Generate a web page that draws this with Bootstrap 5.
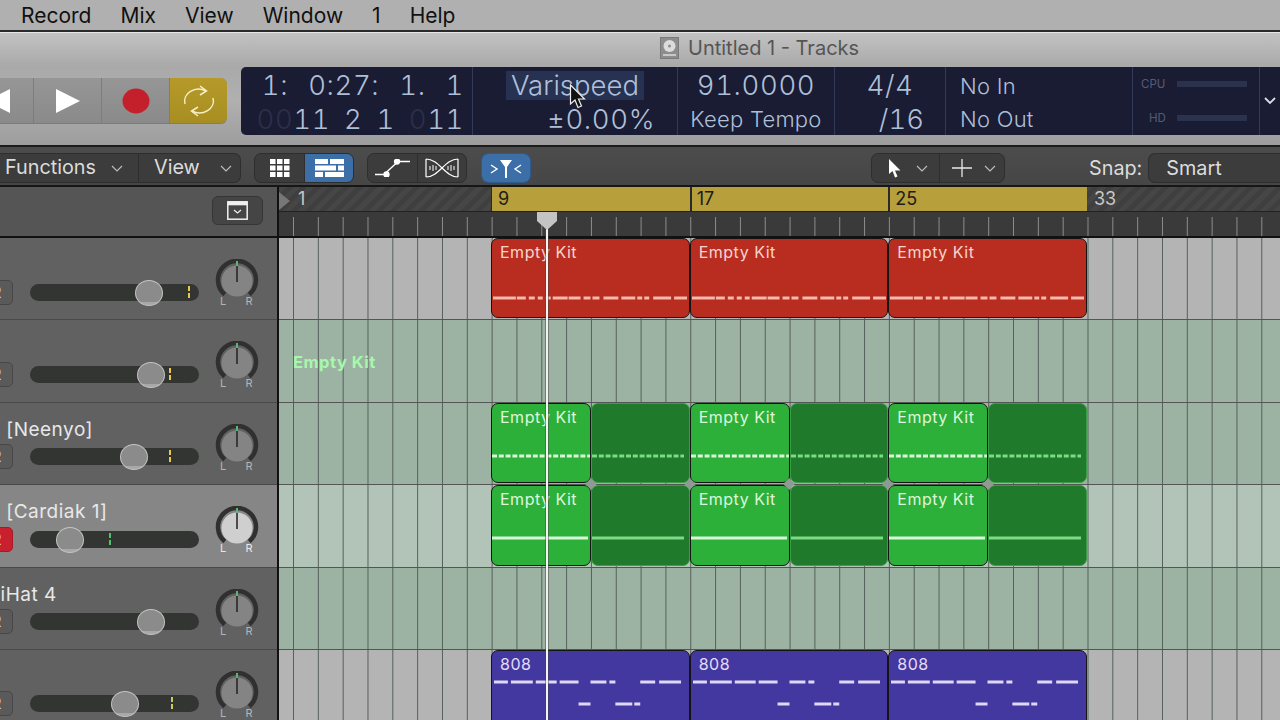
<!DOCTYPE html>
<html lang="en">
<head>
<meta charset="utf-8">
<title>Untitled 1 - Tracks</title>
<link href="https://cdn.jsdelivr.net/npm/bootstrap@5.3.0/dist/css/bootstrap.min.css" rel="stylesheet">
<style>
html,body{width:1280px;height:720px;overflow:hidden;margin:0;background:#555;font-family:Inter,"Noto Sans",sans-serif;}
.stage{width:1280px;height:720px;position:relative;overflow:hidden;}
.stage>*{flex:none;}
.menubar{height:30px;background:#b0b0b0;color:#111;font-size:21px;line-height:31px;padding-left:21px;gap:29px;}
.winrule{height:3px;background:#2a2a2a;border-bottom:1px solid #e6e6e6;}
.chrome{height:114px;background:linear-gradient(#c2c2c2,#a9a9a9 30%,#b0b0b0 60%,#9d9d9d);border-bottom:2px solid #1c1c1c;}
.wintitle{height:34px;padding:0 0 5px 660px;gap:9px;color:#555;font-size:20px;}
.transport{height:46px;margin-top:11px;width:227px;flex:none;border-radius:0 6px 6px 0;overflow:hidden;background:#8f8f8f;border-bottom:1px solid #7b7b7b;}
.tseg{border-right:1px solid #7d7d7d;background:linear-gradient(#969696,#8a8a8a);}
.tseg-a{width:34px;overflow:hidden;}
.tseg-b{width:68px;}
.tseg-c{width:57px;background:linear-gradient(#b59a2a,#a88e22);border:0;}
.lcd{margin-left:14px;height:68px;flex:1;background:#1a1c33;border-radius:5px 0 0 5px;color:#aebfd8;overflow:hidden;}
.lcol{border-right:1px solid #333a58;height:68px;flex:none;position:relative;}
.lcol-1{width:232px;}.lcol-2{width:205px;}.lcol-3{width:157px;}.lcol-4{width:111px;}.lcol-5{width:187px;}.lcol-6{width:127px;}
.lbig{font-size:27.5px;font-weight:300;line-height:36px;height:36px;white-space:pre;font-variant-numeric:tabular-nums;letter-spacing:.6px;}
.lbig2{line-height:32px;height:32px;}
.lsmall{font-size:22px;font-weight:300;line-height:32px;height:32px;white-space:pre;letter-spacing:.25px;}
.lsmall-t{height:36px;line-height:38px;}
.ws-wide{word-spacing:2px;}
.ws-row{word-spacing:-1px;}
.ldim{color:#2b2f4a;}
.vsp-wrap{height:36px;}
.vsp{display:inline-block;background:#273151;padding:0 5px;height:29px;line-height:28px;margin-top:4px;font-size:27.5px;font-weight:300;}
.pad-r22{padding-right:22px;}
.pad-r21{padding-right:21px;letter-spacing:0;}
.lpad{padding-left:14px;}
.meters{padding:10px 12px 10px 0;}
.cpu{font-size:11.5px;color:#535c77;line-height:14px;}
.cpubar{width:70px;height:6px;background:#2b324d;}
.toolbar{height:40px;background:linear-gradient(#4c4c4c,#464646);border-bottom:2px solid #161616;padding-top:6px;color:#dcdcdc;font-size:19.8px;}
.tg{height:30px;background:#3c3c3c;border:1px solid #2e2e2e;border-radius:7px;overflow:hidden;flex:none;}
.tb,.btn-group>.tb{height:100%;border:0;border-radius:0;padding:0;color:#dcdcdc;background:transparent;font-size:19.8px;flex:none;margin:0;}
.btn-group>.tb+.tb{border-left:1px solid #2e2e2e;}
.btn-group>.tb-on{background:#3c6ea8;flex:1;}
.tb:hover{color:#dcdcdc;}
.w-rest{flex:1 1 0!important;}
.chev-m{margin-right:12px;}
.sidebar{width:279px;flex:none;border-right:2px solid #111;background:#616161;}
.rulerhead{height:51px;background:#555;border-bottom:2px solid #111;}
.rhbtn{width:51px;height:29px;margin:9px 14px 0 0;background:#454545;border:1px solid #363636;border-radius:6px;}
.trk{height:82.4px;background:#616161;border-bottom:1px solid #494949;color:#e8e8e8;overflow:hidden;}
.trk-on{background:#868686;}
.tl{width:216px;flex:none;}
.tname{height:24px;margin-top:15px;line-height:24px;font-size:19px;white-space:nowrap;letter-spacing:.5px;}
.tctl{height:26px;margin-top:2px;}
.rbtn{width:34px;height:25px;margin-left:-21px;flex:none;background:#5a5a5a;border:1px solid #474747;border-radius:5px;font-size:16px;line-height:23px;text-align:center;font-weight:600;color:#e8e8e8;padding:0;}
.rbtn-on{background:#c8202f;border-color:#a61a26;color:#fff;}
.fader{width:169px;height:17px;margin-left:17px;background:#333533;border-radius:9px;position:relative;flex:none;}
.thumb{position:absolute;top:-4px;width:28px;height:26px;margin-left:-14px;border-radius:50%;background:linear-gradient(#8a8b8a 86%,#a8a8a8 86%);border:1.5px solid #c4c4c4;}
.lvl{position:absolute;top:2px;width:2px;height:13px;background:repeating-linear-gradient(#e8c84a 0 5px,transparent 5px 7px);margin-left:-1px;}
.panwrap{margin:21px 0 0 -2px;flex:none;}
.panwrap text{font-size:11px;fill:#b4b4b4;font-family:Inter,sans-serif;}
.arrange{flex:1;position:relative;min-width:0;}
.ruler{height:51px;border-bottom:2px solid #111;background:#3a3a3a;}
.bars{height:25px;border-bottom:1px solid #222;background:repeating-linear-gradient(135deg,#464646 0 5px,#3f3f3f 5px 10px);color:#c8c8c8;font-size:18px;line-height:24px;}
.hatch1{width:212px;flex:none;padding-left:19px;}
.hatch2{padding-left:7px;}
.gold{background:#b79f3c;color:#1c1c1c;flex:none;}
.goldbar{width:198.67px;flex:none;border-left:1px solid #2a2a2a;padding-left:6px;}
.goldbar+.goldbar{border-left:2px solid #2a2a2a;padding-left:5px;}
.ticks{height:24px;background-image:linear-gradient(90deg,#8c8c8c 1px,transparent 1px);background-size:24.83px 100%;background-position:14px 5px;background-repeat:repeat-x;}
.lane{height:82.4px;padding:0 0 1px 212px;border-bottom:1px solid #555;background-color:#b4b4b4;background-image:linear-gradient(90deg,#55605a 1px,transparent 1px);background-size:24.83px 100%;background-position:14px 0;}
.lane-g{background-color:#9cb2a2;}
.lane-s{background-color:#b2c4b7;}
.lane-p{padding:2px 0 0 14px;color:#a8f7ac;font-weight:700;font-size:16.5px;letter-spacing:.5px;}
.clip{width:198.67px;flex:none;border:1px solid #141414;border-radius:7px;font-size:16px;letter-spacing:.5px;overflow:hidden;height:100%;}
.clip-r{background:#b92d20;color:#f7d5cd;}
.clip-u{background:#43389f;color:#e4dcf8;border-radius:7px 7px 0 0;height:80px;}
.pair{width:198.67px;flex:none;height:100%;}
.clip-g{background:#2db03a;color:#dcf7dc;width:100px;flex:none;border:1px solid #141414;border-radius:7px;font-size:16px;letter-spacing:.5px;overflow:hidden;}
.loop-g{background:#1f7a2b;flex:1;border:1.5px solid #3c9c47;border-radius:7px;overflow:hidden;}
.clabel{padding-left:8px;height:27px;line-height:27px;}
.nt{display:block;}
.off-r{margin-top:30px;}
.off-g{margin-top:23px;}
.off-lp{margin-top:50px;}
.off-u{margin-top:2px;}
.playline{position:absolute;left:267px;top:26px;bottom:0;width:2px;background:#f4f4f4;box-shadow:0 0 0 .5px #444;}
.playhead{position:absolute;left:257px;top:25px;}
.loopmark{position:absolute;left:-1px;top:5px;}
.joint{position:absolute;top:293px;width:8px;height:8px;background:#8f9a92;transform:rotate(45deg);}
.pointer{position:absolute;left:569px;top:84px;}
</style>
</head>
<body>
<svg width="0" height="0" class="d-none">
<symbol id="mred" viewBox="0 0 198 4"><path d="M1 2H24M25 2H34M37 2H43M46 2H51M54 2H59M61 2H76M77 2H89M92 2H99M101 2H108M112 2H127M130 2H144M146 2H151M153 2H158M162 2H180M183 2H196" stroke="#f6b9ab" stroke-width="3"/></symbol>
<symbol id="mpur" viewBox="0 0 198 26"><path d="M2 2H16M19 2H41M44 2H65M68 2H87M99 2H115M118 2H124M149 2H164M168 2H190" stroke="#e0d8f7" stroke-width="3"/><path d="M87 24H99M124 24H141M143 24H149" stroke="#e0d8f7" stroke-width="3"/></symbol>
<symbol id="pan" viewBox="0 0 46 50"><path d="M10.8 35.5A19 19 0 1 1 35.2 35.5" fill="none" stroke="#2f302f" stroke-width="4.5"/></symbol>
</svg>
<div class="stage d-flex flex-column">
  <div class="menubar d-flex"><span>Record</span><span>Mix</span><span>View</span><span>Window</span><span>1</span><span>Help</span></div>
  <div class="winrule"></div>
  <div class="chrome">
    <div class="wintitle d-flex align-items-center">
      <svg width="19" height="22" viewBox="0 0 19 22"><rect x=".5" y=".5" width="18" height="21" fill="#8d8d8d" stroke="#7a7a7a"/><circle cx="9.5" cy="9" r="6" fill="#dcdcdc"/><circle cx="9.5" cy="9" r="1.5" fill="#8d8d8d"/><rect x="3" y="17" width="13" height="2" fill="#c8c8c8"/></svg>
      <span>Untitled 1 - Tracks</span>
    </div>
    <div class="d-flex">
      <div class="transport d-flex">
        <div class="tseg tseg-a d-flex align-items-center"><svg width="10" height="24" viewBox="0 0 10 24"><path d="M-14 12L10 0V24Z" fill="#fff"/></svg></div>
        <div class="tseg tseg-b d-flex align-items-center justify-content-center"><svg width="24" height="24" viewBox="0 0 24 24"><path d="M0 0L24 12L0 24Z" fill="#fff"/></svg></div>
        <div class="tseg tseg-b d-flex align-items-center justify-content-center"><svg width="28" height="26" viewBox="0 0 28 26"><ellipse cx="14" cy="13" rx="13.5" ry="12.5" fill="#c4202c"/></svg></div>
        <div class="tseg tseg-c d-flex align-items-center justify-content-center"><svg width="34" height="32" viewBox="0 0 34 32" fill="none" stroke="#f6efc4" stroke-width="1.5"><path d="M3 19A14 12 0 0 1 24 6"/><path d="M18 1L24.500 6L18 10"/><path d="M31 13A14 12 0 0 1 10 26"/><path d="M16 31L9.500 26L16 22"/></svg></div>
      </div>
      <div class="lcd d-flex">
        <div class="lcol lcol-1 text-end pe-2"><div class="lbig ws-wide">1:  0:27:  1.  1</div><div class="lbig lbig2 ws-row"><span class="ldim">00</span>11  2  1  <span class="ldim">0</span>11</div></div>
        <div class="lcol lcol-2"><div class="text-center vsp-wrap"><span class="vsp">Varispeed</span></div><div class="lbig lbig2 text-end pad-r22">±0.00%</div></div>
        <div class="lcol lcol-3 text-center"><div class="lbig">91.0000</div><div class="lsmall">Keep Tempo</div></div>
        <div class="lcol lcol-4"><div class="lbig text-center">4/4</div><div class="lbig lbig2 text-end pad-r21">/16</div></div>
        <div class="lcol lcol-5 lpad"><div class="lsmall lsmall-t">No In</div><div class="lsmall">No Out</div></div>
        <div class="lcol lcol-6 meters d-flex flex-column justify-content-between">
          <div class="d-flex align-items-center justify-content-between ps-2"><span class="cpu">CPU</span><span class="cpubar"></span></div>
          <div class="d-flex align-items-center justify-content-between ps-3"><span class="cpu">HD</span><span class="cpubar"></span></div>
        </div>
        <div class="flex-fill d-flex align-items-center justify-content-center"><svg width="12" height="8" viewBox="0 0 12 8"><path d="M1 1L6 6L11 1" fill="none" stroke="#d8dde8" stroke-width="1.800"/></svg></div>
      </div>
    </div>
  </div>
  <div class="toolbar d-flex">
    <div class="tg btn-group" style="width:241px;border-left:0;border-radius:0 7px 7px 0" role="group">
      <button class="btn tb d-flex align-items-center" style="width:139px;padding-left:5px"><span>Functions</span><svg class="ms-auto me-3" width="12" height="7" viewBox="0 0 12 7"><path d="M1 1L6 6L11 1" fill="none" stroke="#bbb" stroke-width="1.200"/></svg></button>
      <button class="btn tb w-rest d-flex align-items-center" style="padding-left:15px"><span>View</span><svg class="ms-auto me-2" width="12" height="7" viewBox="0 0 12 7"><path d="M1 1L6 6L11 1" fill="none" stroke="#bbb" stroke-width="1.200"/></svg></button>
    </div>
    <div class="tg btn-group" style="width:100px;margin-left:13px" role="group">
      <button class="btn tb d-flex align-items-center justify-content-center" style="width:50px" aria-label="Grid"><svg width="20" height="18" viewBox="0 0 20 18" fill="#fff"><rect width="5.500" height="5"/><rect x="7" width="5.500" height="5"/><rect x="14" width="5.500" height="5"/><rect y="6.500" width="5.500" height="5"/><rect x="7" y="6.500" width="5.500" height="5"/><rect x="14" y="6.500" width="5.500" height="5"/><rect y="13" width="5.500" height="5"/><rect x="7" y="13" width="5.500" height="5"/><rect x="14" y="13" width="5.500" height="5"/></svg></button>
      <button class="btn tb tb-on d-flex align-items-center justify-content-center" aria-label="List"><svg width="29" height="18" viewBox="0 0 29 18" fill="#fff"><rect width="13" height="5"/><rect x="15" width="14" height="5"/><rect y="6.500" width="21" height="5"/><rect x="23" y="6.500" width="6" height="5"/><rect y="13" width="8" height="5"/><rect x="10" y="13" width="19" height="5"/></svg></button>
    </div>
    <div class="tg btn-group" style="width:100px;margin-left:13px" role="group">
      <button class="btn tb d-flex align-items-center justify-content-center" style="width:50px" aria-label="Automation"><svg width="36" height="18" viewBox="0 0 36 18" fill="none" stroke="#fff" stroke-width="1.300"><path d="M0 15.500H9L23 2.500H35"/><circle cx="11.500" cy="15.500" r="2.500" fill="#fff"/><circle cx="22" cy="2.500" r="2.500" fill="#fff"/></svg></button>
      <button class="btn tb w-rest d-flex align-items-center justify-content-center" aria-label="Flex"><svg width="34" height="20" viewBox="0 0 34 20" fill="none" stroke="#fff" stroke-width="1.200"><path d="M1 1C14 1 20 19 33 19M1 19C14 19 20 1 33 1M1 1V19M33 1V19"/><path d="M5 8V12M8 7V13M11 8V12M23 8V12M26 7V13M29 8V12" stroke-width="1"/></svg></button>
    </div>
    <div class="tg btn-group" style="width:50px;margin-left:14px;border-color:#2f5a8c" role="group">
      <button class="btn tb tb-on d-flex align-items-center justify-content-center" aria-label="Catch"><svg width="32" height="19" viewBox="0 0 32 19" fill="none" stroke="#fff" stroke-width="1.400"><path d="M1 6L7 10L1 14M31 6L25 10L31 14"/><path d="M10 1H22L17 8V19H15V8Z" fill="#fff" stroke="none"/></svg></button>
    </div>
    <div class="tg btn-group" style="width:134px;margin-left:340px" role="group">
      <button class="btn tb d-flex align-items-center" style="width:68px;padding-left:16px" aria-label="Pointer"><svg width="14" height="19" viewBox="0 0 14 19"><path d="M1 0V15L4.500 12L7 18.500L9.500 17.500L7 11.500H12.500Z" fill="#fff"/></svg><svg class="ms-auto chev-m" width="12" height="7" viewBox="0 0 12 7"><path d="M1 1L6 6L11 1" fill="none" stroke="#bbb" stroke-width="1.200"/></svg></button>
      <button class="btn tb w-rest d-flex align-items-center" style="padding-left:12px" aria-label="Marquee"><svg width="20" height="18" viewBox="0 0 20 18"><path d="M0 9H20M10 0V18" stroke="#e8e8e8" stroke-width="1.300"/></svg><svg class="ms-auto me-2" width="12" height="7" viewBox="0 0 12 7"><path d="M1 1L6 6L11 1" fill="none" stroke="#bbb" stroke-width="1.200"/></svg></button>
    </div>
    <span style="margin-left:84px;line-height:30px">Snap:</span>
    <div class="tg" style="margin-left:6px;flex:1;border-right:0;border-radius:7px 0 0 7px;padding-left:17px;line-height:28px">Smart</div>
  </div>
  <div class="d-flex" style="height:533px">
    <div class="sidebar">
      <div class="rulerhead d-flex justify-content-end"><div class="rhbtn d-flex align-items-center justify-content-center"><svg width="21" height="19" viewBox="0 0 21 19"><rect x=".8" y=".8" width="19.400" height="17.400" fill="none" stroke="#f0f0f0" stroke-width="1.500"/><rect x=".8" y=".8" width="19.400" height="3.500" fill="#f0f0f0"/><path d="M7 9L10.500 12L14 9" fill="none" stroke="#f0f0f0" stroke-width="1.200"/></svg></div></div>

      <div class="trk d-flex"><div class="tl"><div class="tname"></div><div class="tctl d-flex align-items-center"><button class="rbtn">R</button><div class="fader"><span class="thumb" style="left:119px"></span><span class="lvl" style="left:159px"></span></div></div></div><svg class="panwrap" width="46" height="50"><use href="#pan"/><circle cx="23" cy="22" r="15.500" fill="#848484"/><path d="M23 2V7" stroke="#55b87a" stroke-width="2"/><path d="M23 7V23" stroke="#222" stroke-width="1.500"/><text x="9" y="46" text-anchor="middle">L</text><text x="35" y="46" text-anchor="middle">R</text></svg></div>

      <div class="trk d-flex"><div class="tl"><div class="tname"></div><div class="tctl d-flex align-items-center"><button class="rbtn">R</button><div class="fader"><span class="thumb" style="left:121px"></span><span class="lvl" style="left:140px"></span></div></div></div><svg class="panwrap" width="46" height="50"><use href="#pan"/><circle cx="23" cy="22" r="15.500" fill="#848484"/><path d="M23 2V7" stroke="#55b87a" stroke-width="2"/><path d="M23 7V23" stroke="#222" stroke-width="1.500"/><text x="9" y="46" text-anchor="middle">L</text><text x="35" y="46" text-anchor="middle">R</text></svg></div>

      <div class="trk d-flex"><div class="tl"><div class="tname" style="margin-left:-25px">Kit [Neenyo]</div><div class="tctl d-flex align-items-center"><button class="rbtn">R</button><div class="fader"><span class="thumb" style="left:104px"></span><span class="lvl" style="left:140px"></span></div></div></div><svg class="panwrap" width="46" height="50"><use href="#pan"/><circle cx="23" cy="22" r="15.500" fill="#848484"/><path d="M23 2V7" stroke="#55b87a" stroke-width="2"/><path d="M23 7V23" stroke="#222" stroke-width="1.500"/><text x="9" y="46" text-anchor="middle">L</text><text x="35" y="46" text-anchor="middle">R</text></svg></div>

      <div class="trk trk-on d-flex"><div class="tl"><div class="tname" style="margin-left:-25px">Kit [Cardiak 1]</div><div class="tctl d-flex align-items-center"><button class="rbtn rbtn-on">R</button><div class="fader"><span class="thumb" style="left:40px"></span><span class="lvl" style="left:80px;background:repeating-linear-gradient(#4fc46a 0 5px,transparent 5px 7px)"></span></div></div></div><svg class="panwrap" width="46" height="50"><use href="#pan"/><circle cx="23" cy="22" r="15.500" fill="#cfcfcf"/><path d="M23 2V7" stroke="#55b87a" stroke-width="2"/><path d="M23 7V23" stroke="#222" stroke-width="1.500"/><text x="9" y="46" text-anchor="middle" style="fill:#e8e8e8">L</text><text x="35" y="46" text-anchor="middle" style="fill:#e8e8e8">R</text></svg></div>

      <div class="trk d-flex"><div class="tl"><div class="tname" style="margin-left:-14px">HiHat 4</div><div class="tctl d-flex align-items-center"><button class="rbtn">R</button><div class="fader"><span class="thumb" style="left:121px"></span></div></div></div><svg class="panwrap" width="46" height="50"><use href="#pan"/><circle cx="23" cy="22" r="15.500" fill="#848484"/><path d="M23 2V7" stroke="#55b87a" stroke-width="2"/><path d="M23 7V23" stroke="#222" stroke-width="1.500"/><text x="9" y="46" text-anchor="middle">L</text><text x="35" y="46" text-anchor="middle">R</text></svg></div>

      <div class="trk d-flex" style="height:80px;border:0"><div class="tl"><div class="tname"></div><div class="tctl d-flex align-items-center"><button class="rbtn">R</button><div class="fader"><span class="thumb" style="left:95px"></span><span class="lvl" style="left:142px;background:repeating-linear-gradient(#c9cc5a 0 5px,transparent 5px 7px)"></span></div></div></div><svg class="panwrap" width="46" height="50"><use href="#pan"/><circle cx="23" cy="22" r="15.500" fill="#848484"/><path d="M23 2V7" stroke="#55b87a" stroke-width="2"/><path d="M23 7V23" stroke="#222" stroke-width="1.500"/><text x="9" y="46" text-anchor="middle">L</text><text x="35" y="46" text-anchor="middle">R</text></svg></div>
    </div>

    <div class="arrange">
      <div class="ruler">
        <div class="bars d-flex">
          <div class="hatch1">1</div>
          <div class="gold d-flex"><div class="goldbar">9</div><div class="goldbar">17</div><div class="goldbar">25</div></div>
          <div class="hatch2">33</div>
        </div>
        <div class="ticks"></div>
      </div>

      <div class="lane d-flex">
        <div class="clip clip-r"><div class="clabel">Empty Kit</div><svg class="nt off-r" width="197" height="4"><use href="#mred"/></svg></div>
        <div class="clip clip-r"><div class="clabel">Empty Kit</div><svg class="nt off-r" width="197" height="4"><use href="#mred"/></svg></div>
        <div class="clip clip-r"><div class="clabel">Empty Kit</div><svg class="nt off-r" width="197" height="4"><use href="#mred"/></svg></div>
      </div>
      <div class="lane lane-g lane-p d-flex align-items-center">Empty Kit</div>
      <div class="lane lane-g d-flex">
        <div class="pair d-flex"><div class="clip-g"><div class="clabel">Empty Kit</div><svg class="nt off-g" width="98" height="4"><path d="M0 2H98" stroke="#d8f7d8" stroke-width="3" stroke-dasharray="5 1.800"/></svg></div><div class="loop-g"><svg class="nt off-lp" width="92" height="4"><path d="M0 2H92" stroke="#7bdc84" stroke-width="2.800" stroke-dasharray="5 1.800"/></svg></div></div>
        <div class="pair d-flex"><div class="clip-g"><div class="clabel">Empty Kit</div><svg class="nt off-g" width="98" height="4"><path d="M0 2H98" stroke="#d8f7d8" stroke-width="3" stroke-dasharray="5 1.800"/></svg></div><div class="loop-g"><svg class="nt off-lp" width="92" height="4"><path d="M0 2H92" stroke="#7bdc84" stroke-width="2.800" stroke-dasharray="5 1.800"/></svg></div></div>
        <div class="pair d-flex"><div class="clip-g"><div class="clabel">Empty Kit</div><svg class="nt off-g" width="98" height="4"><path d="M0 2H98" stroke="#d8f7d8" stroke-width="3" stroke-dasharray="5 1.800"/></svg></div><div class="loop-g"><svg class="nt off-lp" width="92" height="4"><path d="M0 2H92" stroke="#7bdc84" stroke-width="2.800" stroke-dasharray="5 1.800"/></svg></div></div>
      </div>
      <div class="lane lane-s d-flex">
        <div class="pair d-flex"><div class="clip-g"><div class="clabel">Empty Kit</div><svg class="nt off-g" width="98" height="4"><path d="M0 2H96" stroke="#d8f7d8" stroke-width="3"/></svg></div><div class="loop-g"><svg class="nt off-lp" width="92" height="4"><path d="M0 2H92" stroke="#7bdc84" stroke-width="2.800"/></svg></div></div>
        <div class="pair d-flex"><div class="clip-g"><div class="clabel">Empty Kit</div><svg class="nt off-g" width="98" height="4"><path d="M0 2H96" stroke="#d8f7d8" stroke-width="3"/></svg></div><div class="loop-g"><svg class="nt off-lp" width="92" height="4"><path d="M0 2H92" stroke="#7bdc84" stroke-width="2.800"/></svg></div></div>
        <div class="pair d-flex"><div class="clip-g"><div class="clabel">Empty Kit</div><svg class="nt off-g" width="98" height="4"><path d="M0 2H96" stroke="#d8f7d8" stroke-width="3"/></svg></div><div class="loop-g"><svg class="nt off-lp" width="92" height="4"><path d="M0 2H92" stroke="#7bdc84" stroke-width="2.800"/></svg></div></div>
      </div>
      <div class="lane lane-g"></div>
      <div class="lane d-flex" style="border:0">
        <div class="clip clip-u"><div class="clabel">808</div><svg class="nt off-u" width="197" height="26"><use href="#mpur"/></svg></div>
        <div class="clip clip-u"><div class="clabel">808</div><svg class="nt off-u" width="197" height="26"><use href="#mpur"/></svg></div>
        <div class="clip clip-u"><div class="clabel">808</div><svg class="nt off-u" width="197" height="26"><use href="#mpur"/></svg></div>
      </div>
      <svg class="loopmark" width="13" height="18" viewBox="0 0 13 18"><path d="M1 0L12 9L1 18Z" fill="#777"/></svg>
      <span class="joint" style="left:308px"></span><span class="joint" style="left:407px"></span><span class="joint" style="left:506px"></span><span class="joint" style="left:605px"></span><span class="joint" style="left:705px"></span>
      <span class="playline"></span>
      <svg class="playhead" width="22" height="19" viewBox="0 0 22 19"><path d="M1 0H21V9L11 18L1 9Z" fill="#c4c4c4"/></svg>
    </div>
  </div>
  <svg class="pointer" width="20" height="26" viewBox="0 0 20 26"><path d="M1.500 1V20L6 16L9 23.500L12.500 22L9.500 15H15.500Z" fill="#111" stroke="#eee" stroke-width="1.200"/></svg>
</div>
<script src="https://cdn.jsdelivr.net/npm/bootstrap@5.3.0/dist/js/bootstrap.bundle.min.js"></script>
</body>
</html>
